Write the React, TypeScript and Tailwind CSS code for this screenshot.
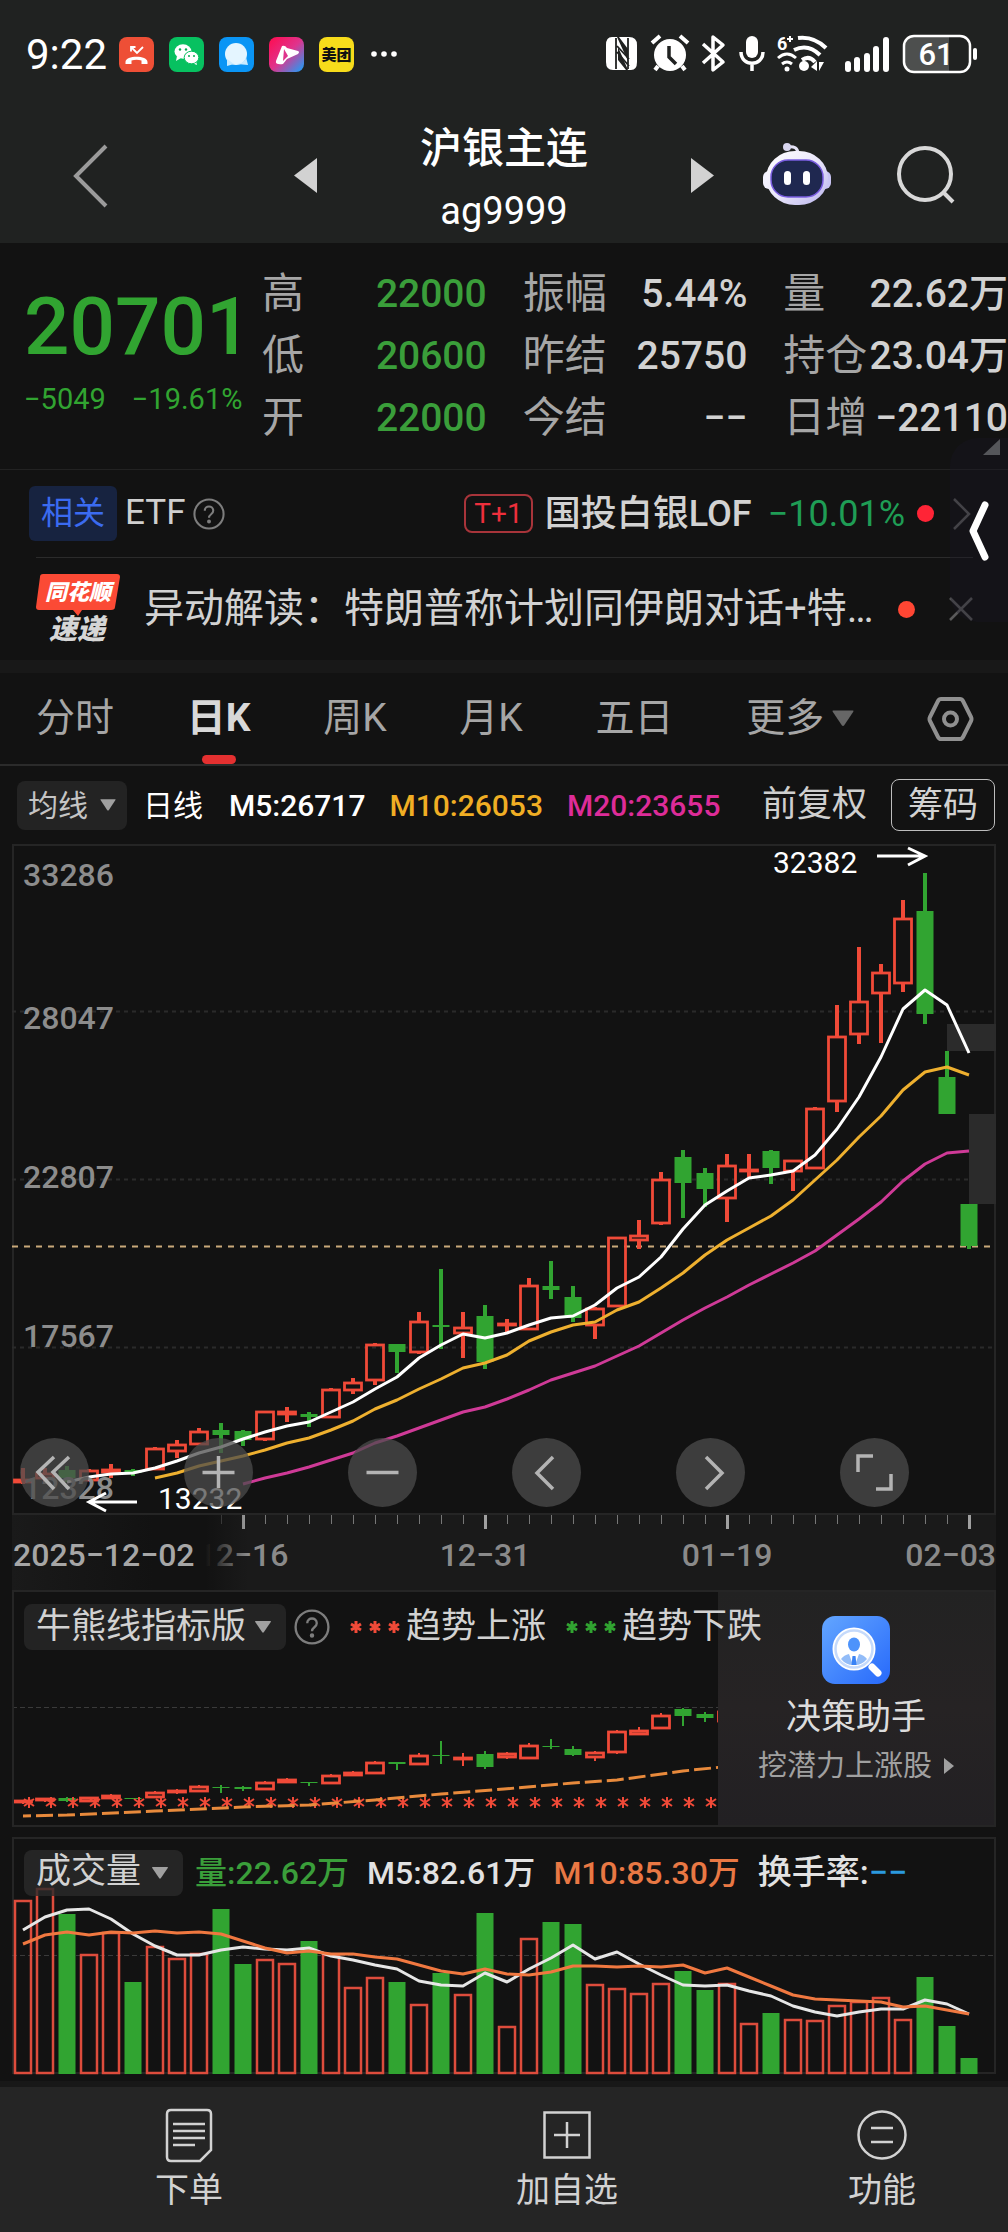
import type { ReactNode } from 'react';

const RED = '#f04a38';
const GREEN = '#31a431';

// One slot per trading day, drawn on a shared 22px pitch
const STEP = 22;
const slotX = (i: number) => 11 + i * STEP;

// [direction, high, body top, body bottom, low]
type Candle = ['u' | 'd', number, number, number, number];

const candles: Candle[] = [
  ['u', 624, 635, 639, 640],
  ['u', 624, 629, 635, 638],
  ['d', 622, 626, 634, 638],
  ['u', 625, 626, 637, 637],
  ['u', 620, 625, 629, 634],
  ['d', 625, 626, 629, 632],
  ['u', 603, 604, 626, 626],
  ['u', 596, 600, 608, 614],
  ['u', 584, 587, 601, 601],
  ['d', 579, 586, 591, 609],
  ['d', 586, 587, 596, 602],
  ['u', 567, 567, 596, 597],
  ['u', 563, 567, 571, 578],
  ['d', 568, 570, 573, 583],
  ['u', 544, 545, 574, 574],
  ['u', 534, 538, 547, 550],
  ['u', 499, 500, 537, 541],
  ['d', 500, 500, 508, 529],
  ['u', 468, 477, 509, 510],
  ['d', 425, 481, 483, 505],
  ['u', 468, 483, 490, 514],
  ['d', 461, 472, 518, 525],
  ['u', 475, 479, 482, 490],
  ['u', 434, 441, 486, 486],
  ['d', 417, 442, 446, 455],
  ['d', 442, 453, 474, 478],
  ['u', 463, 464, 482, 495],
  ['u', 393, 393, 463, 463],
  ['u', 376, 391, 397, 405],
  ['u', 328, 335, 380, 381],
  ['d', 306, 313, 339, 374],
  ['d', 324, 329, 345, 363],
  ['u', 310, 321, 355, 378],
  ['u', 310, 325, 327, 333],
  ['d', 306, 307, 324, 340],
  ['u', 316, 316, 328, 347],
  ['u', 263, 264, 325, 325],
  ['u', 161, 192, 258, 268],
  ['u', 103, 157, 191, 200],
  ['u', 120, 128, 150, 199],
  ['u', 56, 74, 140, 148],
  ['d', 29, 67, 170, 180],
  ['d', 207, 233, 270, 270],
  ['d', 360, 360, 402, 405],
];

const ma5 = [
  638, 633, 630, 629, 624, 617, 609, 603, 595, 588, 582, 578, 568, 558, 545, 533, 514, 501, 490, 494, 489,
  481, 474, 472, 461, 444, 433, 413, 385, 361, 347, 334, 331, 327, 311, 285, 253, 213, 165, 146, 161, 209,
];
const ma10 = [
  634, 629, 622, 617, 612, 606, 599, 594, 586, 577, 565, 556, 545, 535, 524, 519, 511, 497, 488, 481, 478,
  466, 458, 444, 429, 411, 396, 384, 372, 356, 336, 316, 293, 272, 246, 228, 223, 231,
];
const ma20 = [
  640, 634, 629, 623, 616, 609, 599, 592, 584, 576, 568, 563, 555, 546, 536, 529, 522, 512, 502, 489, 476,
  464, 453, 441, 430, 419, 407, 391, 375, 358, 337, 320, 309, 307,
];

const miniCandles: Candle[] = [
  ['u', 210, 210, 213, 214],
  ['u', 208, 208, 211, 212],
  ['d', 207, 208, 211, 212],
  ['u', 207, 207, 212, 212],
  ['u', 204, 205, 209, 209],
  ['d', 208, 208, 209, 209],
  ['u', 201, 202, 208, 208],
  ['u', 199, 200, 203, 204],
  ['u', 195, 196, 202, 202],
  ['d', 195, 197, 198, 203],
  ['d', 196, 197, 199, 201],
  ['u', 191, 192, 200, 200],
  ['u', 188, 189, 193, 193],
  ['d', 192, 192, 193, 196],
  ['u', 184, 185, 194, 194],
  ['u', 181, 182, 186, 186],
  ['u', 171, 172, 184, 184],
  ['d', 172, 172, 174, 180],
  ['u', 163, 165, 175, 175],
  ['d', 151, 165, 166, 174],
  ['u', 163, 167, 170, 176],
  ['d', 161, 164, 177, 179],
  ['u', 162, 163, 168, 169],
  ['u', 153, 155, 169, 169],
  ['d', 149, 156, 157, 159],
  ['d', 156, 159, 165, 166],
  ['u', 161, 162, 168, 171],
  ['u', 140, 141, 163, 164],
  ['u', 137, 140, 145, 145],
  ['u', 123, 125, 139, 139],
  ['d', 118, 119, 126, 136],
  ['d', 122, 124, 128, 132],
  ['u', 120, 121, 132, 132],
];

// [direction, top of the bar]
const volumes: ['u' | 'd', number][] = [
  ['u', 63], ['u', 51], ['d', 77], ['u', 117], ['u', 95], ['d', 145], ['u', 109], ['u', 121], ['u', 116],
  ['d', 72], ['d', 127], ['u', 122], ['u', 126], ['d', 104], ['u', 117], ['u', 150], ['u', 140], ['d', 145],
  ['u', 167], ['d', 136], ['u', 157], ['d', 76], ['u', 189], ['u', 101], ['d', 85], ['d', 87], ['u', 147],
  ['u', 151], ['u', 156], ['u', 146], ['d', 134], ['d', 153], ['u', 146], ['u', 186], ['d', 176], ['u', 182],
  ['u', 183], ['u', 168], ['u', 164], ['u', 160], ['u', 182], ['d', 140], ['d', 189], ['d', 221],
];
const vol5 = [
  93, 80, 73, 72, 82, 97, 109, 118, 118, 113, 110, 112, 113, 111, 119, 123, 128, 132, 144, 148, 149, 136,
  145, 132, 121, 108, 122, 115, 127, 138, 148, 149, 148, 154, 159, 169, 175, 179, 175, 172, 172, 163, 167, 177,
];
const vol10 = [
  107, 98, 95, 98, 95, 96, 94, 96, 95, 97, 104, 111, 116, 114, 117, 117, 120, 122, 128, 134, 137, 132, 137,
  138, 135, 129, 129, 130, 129, 130, 128, 136, 131, 140, 149, 158, 162, 163, 164, 165, 170, 169, 173, 177,
];

const linePoints = (values: number[], start = 0) =>
  values.map((y, i) => `${slotX(start + i)},${y}`).join(' ');

function Candles({ data, wick }: { data: Candle[]; wick: number }) {
  return (
    <>
      {data.map(([dir, high, top, bottom, low], i) => {
        const x = slotX(i);
        if (dir === 'd') {
          return (
            <g key={i} fill={GREEN}>
              <rect x={x - wick / 2} y={high} width={wick} height={low - high} />
              <rect x={x - 8.5} y={top} width={17} height={Math.max(bottom - top, 1)} />
            </g>
          );
        }
        return (
          <g key={i} stroke={RED} fill="none">
            <path d={`M${x} ${high}V${top}M${x} ${bottom}V${low}`} strokeWidth={wick} />
            <rect x={x - 8.5} y={top + 1} width={17} height={Math.max(bottom - top - 2, 1)} strokeWidth={2.8} />
          </g>
        );
      })}
    </>
  );
}

function Caret({ className }: { className: string }) {
  return (
    <svg viewBox="0 0 18 13" className={className} fill="currentColor" aria-hidden="true">
      <path d="M1 0h16q1 0 .4 1L10 12q-1 1.200-2 0L.6 1Q0 0 1 0z" />
    </svg>
  );
}

function Help({ className }: { className: string }) {
  return (
    <svg viewBox="0 0 34 34" className={className} fill="none" stroke="#7d7d7d" strokeWidth="2.200" aria-hidden="true">
      <circle cx="17" cy="17" r="15.500" />
      <path d="M12.500 13.500c0-6 9-6 9 0 0 4-4.500 3.500-4.500 7.500" />
      <circle cx="17" cy="25" r="1" fill="#7d7d7d" />
    </svg>
  );
}

function StatusBar() {
  return (
    <div className="flex h-[108px] items-center pr-7 pl-[26px] text-white">
      <span className="mr-3 text-[42px]">9:22</span>
      <div className="flex gap-[15px]">
        <svg viewBox="0 0 35 35" className="size-[35px]">
          <rect width="35" height="35" rx="8" fill="#ee4f36" />
          <path d="M12 10l6 6 6-6M12 14.500V10h4.500" stroke="#fff" strokeWidth="1.800" fill="none" />
          <path d="M6.500 25c0-7 22-7 22 0v2h-6v-3.500q-5-1.500-10 0V27h-6z" fill="#fff" />
        </svg>
        <svg viewBox="0 0 35 35" className="size-[35px]">
          <rect width="35" height="35" rx="8" fill="#07c160" />
          <ellipse cx="14" cy="14.500" rx="8.500" ry="7.200" fill="#fff" />
          <path d="M8 19l-1 5 5-3zM27 24l1 4-5-2z" fill="#fff" />
          <ellipse cx="22.500" cy="20.500" rx="7.300" ry="6.300" fill="#fff" stroke="#07c160" />
          <g fill="#07a850">
            <circle cx="11" cy="12.500" r="1.200" /><circle cx="17" cy="12.500" r="1.200" />
            <circle cx="20" cy="19" r="1" /><circle cx="25" cy="19" r="1" />
          </g>
        </svg>
        <svg viewBox="0 0 35 35" className="size-[35px]">
          <rect width="35" height="35" rx="8" fill="#0a95f5" />
          <circle cx="17" cy="17" r="11" fill="#e4f5ff" />
          <path d="M8 22v7l7-2zM18 27q8-1 9-7l2 8z" fill="#c9ebff" />
        </svg>
        <svg viewBox="0 0 35 35" className="size-[35px]">
          <defs>
            <linearGradient id="video" x1="0" y1="0" x2="1" y2="1">
              <stop offset="0" stopColor="#ff0b4e" /><stop offset=".5" stopColor="#e0338c" /><stop offset="1" stopColor="#12a5ff" />
            </linearGradient>
          </defs>
          <rect width="35" height="35" rx="8" fill="url(#video)" />
          <path d="M13 9q3-1 5 2l11 3q2 1 0 3L18 22l-4 5q-8 1-7-3z" fill="#fff" />
          <path d="M15 12l4 7-5 5z" fill="#e0338c" />
        </svg>
        <svg viewBox="0 0 35 35" className="size-[35px]">
          <rect width="35" height="35" rx="8" fill="#f7dc1b" />
          <text x="17.500" y="23" textAnchor="middle" fontSize="15" fontWeight="900" fill="#111">美团</text>
        </svg>
      </div>
      <svg viewBox="0 0 28 8" className="ml-4 h-2 w-7" fill="#fff">
        <circle cx="4" cy="4" r="2.800" /><circle cx="14" cy="4" r="2.800" /><circle cx="24" cy="4" r="2.800" />
      </svg>
      <svg viewBox="0 0 376 44" className="ml-auto h-11 w-[376px]" fill="#fff">
        {/* NFC */}
        <path d="M8 5h5l11 24V17L15 5h10q8 0 8 8v17q0 8-6 8h-3L14 15v13l8 10H9q-7 0-7-8V13q0-8 6-8z" />
        <path d="M12 6v31M24 6v31M13 14l12 13M13 20l12 14" stroke="#202221" strokeWidth="1.800" fill="none" />
        {/* Alarm clock */}
        <circle cx="66" cy="23" r="16" />
        <path d="M48 11l8-7M84 11l-8-7M54 34l-3 4M78 34l3 4" stroke="#fff" strokeWidth="4" />
        <path d="M65 14v11l7 7" stroke="#202221" strokeWidth="3.500" fill="none" />
        {/* Bluetooth */}
        <path d="M99 12l20 18-10 8V5l10 8-20 18" stroke="#fff" strokeWidth="3.500" fill="none" strokeLinejoin="round" />
        {/* Microphone */}
        <rect x="142" y="4" width="12" height="22" rx="6" />
        <path d="M137 20c0 15 22 15 22 0M148 31v8" stroke="#fff" strokeWidth="3.500" fill="none" />
        {/* Wi-Fi */}
        <g stroke="#fff" fill="none" strokeWidth="4">
          <path d="M194 6q16-2 28 10M190 18q14-7 26 5M198 28q7-5 13 2" />
          <path d="M174 26q9-8 18 0M178 32q5-4 10 0" strokeWidth="3" />
        </g>
        <circle cx="183" cy="37" r="2.500" /><circle cx="200" cy="34" r="5" />
        <path d="M213 29v10l-6-4zM215 39V30h5z" />
        <text x="173" y="18" fontSize="18" fontWeight="700">6</text>
        <path d="M183 7h6M186 4v6" stroke="#fff" strokeWidth="2" />
        {/* Signal */}
        <rect x="241" y="29" width="6" height="11" rx="3" /><rect x="250" y="25" width="6" height="15" rx="3" />
        <rect x="260" y="21" width="6" height="19" rx="3" /><rect x="269" y="14" width="6" height="26" rx="3" />
        <rect x="279" y="5" width="6" height="35" rx="3" />
        {/* Battery */}
        <path d="M309 5h36v34h-36q-8 0-8-8V13q0-8 8-8z" fill="#4d4f4e" />
        <rect x="300" y="4" width="66" height="36" rx="10" fill="none" stroke="#fff" strokeWidth="2.500" />
        <rect x="369" y="16" width="4" height="12" rx="2" />
        <text x="332" y="33" fontSize="31" fontWeight="500" textAnchor="middle">61</text>
      </svg>
    </div>
  );
}

function NavBar() {
  return (
    <div className="grid h-[135px] grid-cols-[7fr_10fr_7fr] items-center">
      <button aria-label="返回" className="justify-self-start pl-[72px]">
        <svg viewBox="0 0 36 64" className="h-16 w-9" fill="none" stroke="#9b9b9b" strokeWidth="4">
          <path d="M34 2L4 32l30 30" />
        </svg>
      </button>
      <div className="flex items-center justify-between">
        <button aria-label="上一个">
          <svg viewBox="0 0 23 35" className="h-[35px] w-[23px]" fill="#d2d2d2"><path d="M23 0v35L0 17.500z" /></svg>
        </button>
        <h1 className="pt-2 text-center text-white">
          <span className="block text-[42px] leading-[62px] font-medium">沪银主连</span>
          <span className="block text-[38px] leading-[62px]">ag9999</span>
        </h1>
        <button aria-label="下一个">
          <svg viewBox="0 0 23 35" className="h-[35px] w-[23px]" fill="#d2d2d2"><path d="M0 0v35l23-17.500z" /></svg>
        </button>
      </div>
      <div className="flex items-center justify-between pr-[52px] pb-1 pl-12">
        <button aria-label="智能助手">
          <svg viewBox="0 0 70 64" className="h-16 w-[70px]">
            <defs>
              <linearGradient id="shell" x1="0" y1="0" x2="1" y2="1">
                <stop offset="0" stopColor="#fff" /><stop offset=".5" stopColor="#eae7fb" /><stop offset="1" stopColor="#b9b4ec" />
              </linearGradient>
            </defs>
            <rect x="1" y="29" width="14" height="18" rx="6" fill="#f3f2ff" />
            <rect x="55" y="29" width="14" height="18" rx="6" fill="#c9c5f3" />
            <path d="M25 5q11-2 11 7" fill="none" stroke="#e4e2f5" strokeWidth="3" />
            <circle cx="25" cy="5" r="4" fill="#d9d7f0" />
            <rect x="4" y="9" width="62" height="54" rx="29" fill="url(#shell)" />
            <rect x="9" y="18" width="52" height="37" rx="17" fill="#1f2850" stroke="#7a5de0" strokeWidth="1.500" />
            <rect x="22" y="29" width="7" height="14" rx="3.500" fill="#fff" />
            <rect x="41" y="29" width="7" height="14" rx="3.500" fill="#fff" />
          </svg>
        </button>
        <button aria-label="搜索">
          <svg viewBox="0 0 60 60" className="size-[60px]" fill="none" stroke="#d8d8d8" strokeWidth="4">
            <circle cx="29" cy="30" r="26" /><path d="M47 48l10 10" />
          </svg>
        </button>
      </div>
    </div>
  );
}

const quoteColumns = [
  [
    { label: '高', value: '22000', down: true },
    { label: '低', value: '20600', down: true },
    { label: '开', value: '22000', down: true },
  ],
  [
    { label: '振幅', value: '5.44%' },
    { label: '昨结', value: '25750' },
    { label: '今结', value: '−−' },
  ],
  [
    { label: '量', value: '22.62万' },
    { label: '持仓', value: '23.04万' },
    { label: '日增', value: '−22110' },
  ],
];

function Quote() {
  return (
    <section className="flex border-b border-[#222] py-5">
      <div className="w-[26%] shrink-0 pl-6 text-[#31a431]">
        <div className="pt-3 text-[80px] leading-[104px] font-medium">20701</div>
        <div className="flex gap-[26px] text-[29px] leading-10">
          <span>−5049</span>
          <span>−19.61%</span>
        </div>
      </div>
      <div className="grid flex-1 grid-cols-3 gap-9">
        {quoteColumns.map((rows, i) => (
          <dl key={i} className="text-[39px] leading-[62px]">
            {rows.map((row) => (
              <div key={row.label} className="flex justify-between whitespace-nowrap">
                <dt className="text-[42px] text-[#a6a6a6]">{row.label}</dt>
                <dd className={'down' in row ? 'font-medium text-[#3a9e3a]' : 'font-medium text-[#d2d2d2]'}>{row.value}</dd>
              </div>
            ))}
          </dl>
        ))}
      </div>
    </section>
  );
}

function Related() {
  return (
    <section className="relative">
      <div className="flex h-[87px] items-center pr-[37px] pl-[29px] whitespace-nowrap">
        <span className="rounded-md bg-[#172340] px-3 text-[32px] leading-[55px] text-[#3b6bf0]">相关</span>
        <span className="ml-2 text-[35px] text-[#cfcfcf]">ETF</span>
        <Help className="ml-2 size-8" />
        <span className="ml-auto rounded-lg border-2 border-[#a8343a] px-2 text-[28px] leading-[35px] text-[#ee2f3c]">T+1</span>
        <a href="#lof" className="ml-3 text-[36px] font-medium text-[#d2d2d2]">国投白银LOF</a>
        <span className="ml-4 text-[36px] text-[#1f9d55]">−10.01%</span>
        <span className="ml-3 size-[17px] rounded-full bg-[#ff2436]" />
        <svg viewBox="0 0 18 32" className="ml-[19px] h-8 w-[18px]" fill="none" stroke="#5a5a5a" strokeWidth="2.500">
          <path d="M1 1l15 15L1 31" />
        </svg>
      </div>
      <div className="mr-[35px] ml-9 flex h-[103px] items-center border-t border-[#2b2b2b]">
        <svg viewBox="0 0 84 70" className="h-[70px] w-[84px] shrink-0 overflow-visible">
          <path d="M7 0h74q3 0 3 3l-5 30q0 3-4 3H46l-4 6-5-6H3q-3 0-3-3L4 3q0-3 3-3z" fill="#fb4a35" />
          <text x="42" y="26" textAnchor="middle" fontSize="22" fontWeight="900" fontStyle="italic" fill="#fff">同花顺</text>
          <text x="41" y="65" textAnchor="middle" fontSize="28" fontWeight="900" fontStyle="italic" fill="#d6d6d6">速递</text>
        </svg>
        <a href="#news" className="ml-6 text-[40px] whitespace-nowrap text-[#d2d2d2]">异动解读：特朗普称计划同伊朗对话+特…</a>
        <span className="ml-auto size-[17px] shrink-0 rounded-full bg-[#ff4633]" />
        <button aria-label="关闭" className="ml-[34px] shrink-0">
          <svg viewBox="0 0 24 24" className="size-6" fill="none" stroke="#5a5a5a" strokeWidth="2.500">
            <path d="M1 1l22 22M23 1L1 23" />
          </svg>
        </button>
      </div>
      {/* Edge drawer handle */}
      <button aria-label="展开侧栏" className="absolute -top-8 right-0 h-[184px] w-[58px] rounded-l-[28px] bg-[#1a1824]/35">
        <svg viewBox="0 0 58 184" className="h-full w-full">
          <path d="M50 1v16H33z" fill="#55565a" />
          <path d="M35 67L23 93l12 26" fill="none" stroke="#fff" strokeWidth="7" strokeLinecap="round" strokeLinejoin="round" />
        </svg>
      </button>
    </section>
  );
}

const periods = ['分时', '日K', '周K', '月K', '五日'];

function Periods() {
  return (
    <nav className="box-content flex h-[91px] items-stretch justify-between border-t-[13px] border-b-2 border-[#181818] border-b-[#2b2b2b] pr-[34px] pl-9 text-[39px] text-[#a6a6a6]">
      {periods.map((period) =>
        period === '日K' ? (
          <button key={period} className="relative font-bold text-[#d8d8d8]">
            {period}
            <span className="absolute inset-x-[15px] bottom-0 h-[9px] rounded-full bg-[#e43030]" />
          </button>
        ) : (
          <button key={period}>{period}</button>
        ),
      )}
      <button className="flex items-center gap-2">
        更多
        <Caret className="h-[17px] w-[22px] text-[#666]" />
      </button>
      <button aria-label="图表设置">
        <svg viewBox="0 0 47 44" className="h-11 w-[47px]" fill="none" stroke="#909090" strokeWidth="4">
          <path d="M14 2h19q2 0 3 2l8 16q1 2 0 4l-8 16q-1 2-3 2H14q-2 0-3-2L3 24q-1-2 0-4l8-16q1-2 3-2z" />
          <circle cx="23.500" cy="22" r="6.500" />
        </svg>
      </button>
    </nav>
  );
}

function Toolbar() {
  return (
    <div className="flex h-[78px] items-center pr-px pl-[5px] text-[30px] whitespace-nowrap text-white">
      <button className="flex h-[49px] items-center gap-3 rounded-lg bg-[#232323] px-[11px] text-[#c4c4c4]">
        均线
        <Caret className="h-3 w-4 text-[#a0a0a0]" />
      </button>
      <span className="ml-4">日线</span>
      <span className="ml-[26px] font-medium">M5:26717</span>
      <span className="ml-6 font-medium text-[#f0ae24]">M10:26053</span>
      <span className="ml-6 font-medium text-[#dd2c98]">M20:23655</span>
      <button className="ml-auto text-[35px] text-[#cfcfcf]">前复权</button>
      <button className="ml-6 h-[52px] rounded-lg border border-[#bdbdbd] px-4 text-[35px] leading-none text-[#d2d2d2]">筹码</button>
    </div>
  );
}

const priceLabels = [
  { text: '33286', y: 42 },
  { text: '28047', y: 185 },
  { text: '22807', y: 344 },
  { text: '17567', y: 503 },
  { text: '12328', y: 655 },
];

function RoundButton({ label, children }: { label: string; children: ReactNode }) {
  return (
    <button aria-label={label} className="size-[69px] rounded-full bg-[#4c4c4c]/75">
      <svg viewBox="0 0 69 69" className="size-full" fill="none" stroke="#b4b4b4" strokeWidth="3.500">
        {children}
      </svg>
    </button>
  );
}

function KLine() {
  return (
    <div className="relative">
      <svg viewBox="0 0 984 671" className="block w-full overflow-visible" role="img" aria-label="日K线图">
        <path d="M1 671V1h982v670M0 670h984" fill="none" stroke="#252525" strokeWidth="2" />
        <path d="M0 167.500h984M0 335.500h984M0 503.500h984" stroke="#2a2a2a" strokeWidth="2" strokeDasharray="4 4" />
        <path d="M0 402.500h984" stroke="#c9a97a" strokeWidth="2" strokeDasharray="6 6" />
        <rect x="935" y="180" width="49" height="27" fill="#2b2b2b" />
        <rect x="957" y="270" width="27" height="90" fill="#2b2b2b" />
        <Candles data={candles} wick={4} />
        <g fill="none" strokeWidth="3" strokeLinejoin="round">
          <polyline points={linePoints(ma20, 10)} stroke="#cf3a97" />
          <polyline points={linePoints(ma10, 6)} stroke="#eeb02f" />
          <polyline points={linePoints(ma5, 2)} stroke="#fff" />
        </g>
        <g fill="#8c8c8c" className="text-[32px] font-medium">
          {priceLabels.map((label) => (
            <text key={label.text} x="11" y={label.y}>{label.text}</text>
          ))}
        </g>
        <g fill="#fff" className="text-[30px]">
          <text x="761" y="29">32382</text>
          <text x="146" y="665">13232</text>
        </g>
        <path d="M865 12h46M896 4l17 8-17 9M125 658H79M94 649l-17 9 17 9" fill="none" stroke="#fff" strokeWidth="3" />
      </svg>
      <div className="absolute right-[87px] bottom-2 left-2 flex justify-between">
        <RoundButton label="最早"><path d="M34 19L18 34l16 17M49 19L33 34l16 17" /></RoundButton>
        <RoundButton label="放大"><path d="M34.500 18v32M18.500 34.500h32" /></RoundButton>
        <RoundButton label="缩小"><path d="M18.500 34.500h32" /></RoundButton>
        <RoundButton label="左移"><path d="M41 19L25 35l16 16" /></RoundButton>
        <RoundButton label="右移"><path d="M30 19l16 16-16 16" /></RoundButton>
        <RoundButton label="全屏"><path d="M33 18H18v16M36 51h15V36" /></RoundButton>
      </div>
    </div>
  );
}

function TimeAxis() {
  const ticks = Array.from({ length: 36 }, (_, i) => i + 8);
  return (
    <svg viewBox="0 0 984 75" className="block w-full bg-[#1a1a1a]" role="img" aria-label="日期">
      <defs>
        <linearGradient id="fade">
          <stop offset="0" stopColor="#1a1a1a" />
          <stop offset=".6" stopColor="#121212" />
          <stop offset=".82" stopColor="#121212" />
          <stop offset="1" stopColor="#121212" stopOpacity="0" />
        </linearGradient>
      </defs>
      {ticks.map((i) =>
        i % 11 === 10 ? (
          <rect key={i} x={slotX(i) - 1} y="0" width="3" height="14" fill="#a0a0a0" />
        ) : (
          <rect key={i} x={slotX(i)} y="0" width="1" height="9" fill="#777" />
        ),
      )}
      <g fill="#8a8a8a" className="text-[32px] font-medium">
        <text x="231" y="51" textAnchor="middle">12−16</text>
        <text x="473" y="51" textAnchor="middle">12−31</text>
        <text x="715" y="51" textAnchor="middle">01−19</text>
        <text x="984" y="51" textAnchor="end">02−03</text>
      </g>
      <rect width="236" height="75" fill="url(#fade)" />
      <text x="1" y="51" fill="#a6a6a6" className="text-[32px] font-medium">2025−12−02</text>
    </svg>
  );
}

function Stars({ className }: { className: string }) {
  return (
    <svg viewBox="0 0 50 12" className={className} stroke="currentColor" strokeWidth="3">
      {[6, 25, 44].map((x) => (
        <path key={x} d={`M${x} 0v12M${x - 5} 3l10 6M${x - 5} 9l10-6`} />
      ))}
    </svg>
  );
}

function BullBear() {
  return (
    <div className="relative border-2 border-[#252525]">
      <svg viewBox="2 2 980 233" className="block w-full" role="img" aria-label="牛熊线指标">
        <path d="M0 117.500h984" stroke="#3a3a3a" strokeDasharray="5 3" />
        <Candles data={miniCandles} wick={2} />
        <g stroke={RED} strokeWidth="2">
          {miniCandles.slice(0, 32).map((_, i) => {
            const x = slotX(i) + 6;
            return <path key={i} d={`M${x} 207v11M${x - 5} 209l10 7M${x - 5} 216l10-7`} />;
          })}
        </g>
        <polyline
          points="11,226 55,225 143,221 231,217 297,215 363,210 429,204 492,199 561,193 605,190 671,181 710,177"
          fill="none" stroke="#e88a3c" strokeWidth="3" strokeDasharray="17 5" strokeDashoffset="9"
        />
      </svg>
      <aside className="absolute top-0 right-0 bottom-0 flex w-[276px] flex-col items-center bg-linear-to-b from-[#222] via-[#262324] to-[#222023] pt-6">
        <svg viewBox="0 0 68 68" className="size-[68px]">
          <defs>
            <linearGradient id="helper" x1="0" y1="0" x2="1" y2="1">
              <stop offset="0" stopColor="#63a6ff" /><stop offset="1" stopColor="#2769fb" />
            </linearGradient>
          </defs>
          <rect width="68" height="68" rx="13" fill="url(#helper)" />
          <circle cx="32" cy="33" r="20" fill="#fff" stroke="#fff" strokeWidth="3" />
          <circle cx="32" cy="33" r="18.500" fill="none" stroke="#c5dafb" strokeWidth="2.500" />
          <path d="M19 43q3-4 8-5l4 11q-7 0-12-6zM45 43q-3-4-8-5l-4 11q7 0 12-6z" fill="#92bcf8" />
          <ellipse cx="32" cy="28.500" rx="6" ry="7" fill="#4d93fb" />
          <path d="M30.500 40h3l1 9h-5z" fill="#3a83f5" />
          <path d="M50 51l6 6" stroke="#fff" strokeWidth="7" strokeLinecap="round" />
        </svg>
        <strong className="mt-2 text-[35px] leading-[52px] font-normal text-[#dcdcdc]">决策助手</strong>
        <a href="#picks" className="flex items-center gap-3 text-[29px] leading-[44px] text-[#a0a0a0]">
          挖潜力上涨股
          <svg viewBox="0 0 10 16" className="h-4 w-2.5" fill="currentColor"><path d="M0 0l10 8-10 8z" /></svg>
        </a>
      </aside>
      <div className="absolute top-[9px] left-2.5 flex items-center text-[35px] whitespace-nowrap text-[#d2d2d2]">
        <button className="flex h-[46px] items-center gap-2 rounded-lg bg-[#232323] pr-3.5 pl-3">
          牛熊线指标版
          <Caret className="h-3 w-[18px] text-[#a0a0a0]" />
        </button>
        <Help className="ml-2 size-9" />
        <Stars className="mr-1.5 ml-5 h-3 w-[50px] text-[#f04a38]" />
        趋势上涨
        <Stars className="mr-1.5 ml-5 h-3 w-[50px] text-[#31a431]" />
        趋势下跌
      </div>
    </div>
  );
}

function Volume() {
  return (
    <div className="relative mt-2.5">
      <svg viewBox="0 0 984 238" className="block w-full" role="img" aria-label="成交量图">
        <path d="M1 236V1h982v235z" fill="none" stroke="#252525" strokeWidth="2" />
        <path d="M0 118.500h984" stroke="#3a3a3a" strokeDasharray="5 3" />
        {volumes.map(([dir, top], i) =>
          dir === 'd' ? (
            <rect key={i} x={slotX(i) - 8.500} y={top} width="17" height={237 - top} fill={GREEN} />
          ) : (
            <rect key={i} x={slotX(i) - 8} y={top + 1} width="16" height={235 - top} fill="none" stroke="#dd4c3c" strokeWidth="2.500" />
          ),
        )}
        <g fill="none" strokeWidth="3" strokeLinejoin="round">
          <polyline points={linePoints(vol5)} stroke="#e6e6e6" />
          <polyline points={linePoints(vol10)} stroke="#f07840" />
        </g>
      </svg>
      <div className="absolute top-2.5 left-3 flex items-center text-[32px] font-medium whitespace-nowrap text-[#e2e2e2]">
        <button className="mr-3 flex h-[46px] items-center gap-2.5 rounded-lg bg-[#2a2a2a]/80 pr-3.5 pl-3 text-[35px] font-normal text-[#d2d2d2]">
          成交量
          <Caret className="h-3 w-[18px] text-[#a0a0a0]" />
        </button>
        <span className="text-[#3a9e3a]">量:22.62万</span>
        <span className="ml-[18px]">M5:82.61万</span>
        <span className="ml-[18px] text-[#e97844]">M10:85.30万</span>
        <span className="ml-[18px] text-[34px]">换手率:<span className="text-[#2b9ade]">−−</span></span>
      </div>
    </div>
  );
}

function Footer() {
  return (
    <footer className="mt-1.5 grid grid-cols-[3fr_3fr_2fr] border-t-[6px] border-[#181818] bg-[#252525] pt-5 pb-5 text-[34px] text-[#d2d2d2]">
      <button className="flex flex-col items-center">
        <svg viewBox="0 0 56 56" className="size-14" fill="none" stroke="currentColor" strokeWidth="2.500">
          <path d="M10 3h36q4 0 4 4v36L39 54H10q-4 0-4-4V7q0-4 4-4z" />
          <path d="M12 17h32M12 24h32M12 31h32M12 38h22" />
        </svg>
        <span className="mt-1 leading-[46px]">下单</span>
      </button>
      <button className="flex flex-col items-center">
        <svg viewBox="0 0 56 56" className="size-14" fill="none" stroke="currentColor" strokeWidth="2.500">
          <path d="M5.500 5.500h45v45h-45zM28 15v26M15 28h26" />
        </svg>
        <span className="mt-1 leading-[46px]">加自选</span>
      </button>
      <button className="flex flex-col items-center">
        <svg viewBox="0 0 56 56" className="size-14" fill="none" stroke="currentColor" strokeWidth="2.500">
          <circle cx="28" cy="28" r="23.500" /><path d="M17 21h22M17 35h22" />
        </svg>
        <span className="mt-1 leading-[46px]">功能</span>
      </button>
    </footer>
  );
}

export default function App() {
  return (
    <div className="flex min-h-screen flex-col overflow-hidden bg-[#121212] font-[Roboto,'Noto_Sans_CJK_SC',sans-serif]">
      <header className="bg-[#202221]">
        <StatusBar />
        <NavBar />
      </header>
      <Quote />
      <Related />
      <Periods />
      <main className="px-3">
        <Toolbar />
        <KLine />
        <TimeAxis />
        <BullBear />
        <Volume />
      </main>
      <Footer />
      <div className="flex-1 bg-[#252525]" />
    </div>
  );
}
